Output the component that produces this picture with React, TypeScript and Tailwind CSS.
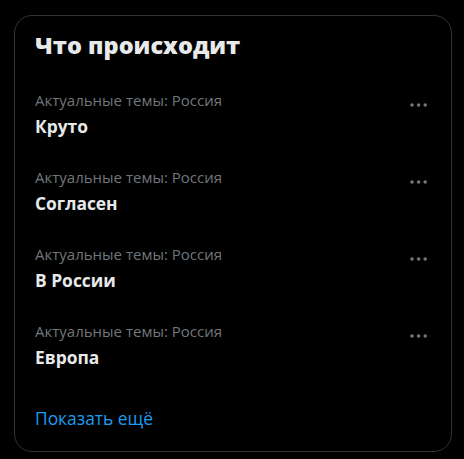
const trends = [
  { label: 'Актуальные темы: Россия', title: 'Круто' },
  { label: 'Актуальные темы: Россия', title: 'Согласен' },
  { label: 'Актуальные темы: Россия', title: 'В России' },
  { label: 'Актуальные темы: Россия', title: 'Европа' },
];

function MoreIcon() {
  return (
    <svg viewBox="0 0 17 4" className="h-[4px] w-[17px]" fill="currentColor">
      <circle cx="2" cy="2" r="1.8" />
      <circle cx="8.6" cy="2" r="1.8" />
      <circle cx="15.2" cy="2" r="1.8" />
    </svg>
  );
}

export default function App() {
  return (
    <div className="min-h-[459px] w-[464px] bg-black pl-[14px] pt-[15px] font-['Open_Sans',sans-serif]">
      <section className="flex h-[437px] w-[438px] flex-col rounded-[18px] border border-[#2f3336] bg-black">
        {/* Header */}
        <h2 className="px-[20px] pt-[15px] pb-[16px] text-[23.5px] font-extrabold leading-[28px] text-[#e7e9ea]">
          Что происходит
        </h2>

        {/* Trends */}
        {trends.map((t) => (
          <div key={t.title} className="relative px-[20px] pt-[15px] pb-[14px]">
            <div className="text-[15px] leading-[20px] text-[#71767b]">{t.label}</div>
            <div className="mt-[4px] text-[17.4px] font-bold leading-[24px] text-[#e7e9ea]">{t.title}</div>
            <div className="absolute right-[24px] top-[28px] text-[#71767b]">
              <MoreIcon />
            </div>
          </div>
        ))}

        {/* Show more */}
        <div className="px-[20px] pt-[23px] text-[17.4px] leading-[24px] text-[#1d9bf0]">Показать ещё</div>
      </section>
    </div>
  );
}
